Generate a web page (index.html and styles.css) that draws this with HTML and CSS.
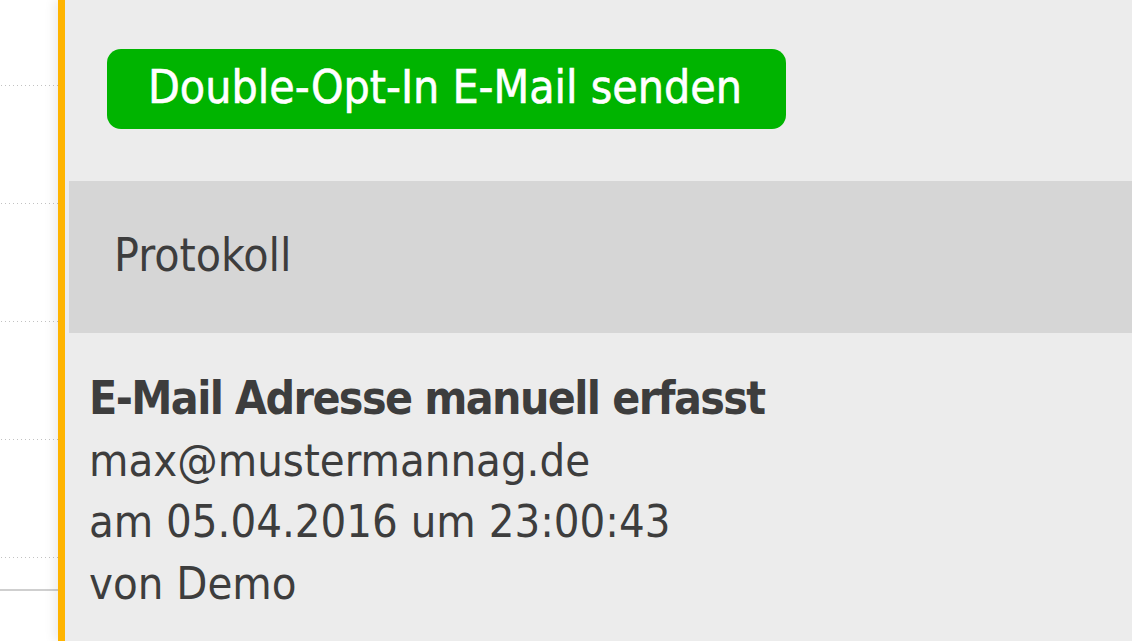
FILE: index.html
```html
<!DOCTYPE html>
<html lang="de">
<head>
    <meta charset="UTF-8" />
    <title>Kontakt: Protokoll</title>
    <link rel="stylesheet" href="styles.css">
</head>
<body>

<div class="layout">
    <div class="list">
        <div class="list-row first"></div>
        <div class="list-row"></div>
        <div class="list-row"></div>
        <div class="list-row"></div>
        <div class="list-row"></div>
        <div class="list-end"></div>
    </div>

    <div class="detail">
        <div class="actions">
            <button class="btn-green">Double-Opt-In E-Mail senden</button>
        </div>

        <div class="section-head">Protokoll</div>

        <div class="log-entry">
            <div class="log-title">E-Mail Adresse manuell erfasst</div>
            <div>max@mustermannag.de</div>
            <div>am 05.04.2016 um 23:00:43</div>
            <div>von Demo</div>
        </div>
    </div>
</div>

</body>
</html>
```

FILE: styles.css
```css
body {
    margin: 0;
    font-family: 'DejaVu Sans Condensed', 'DejaVu Sans', sans-serif;
    color: #3d3d3d;
    background: #ececec;
    overflow: hidden;
}

.layout {
    display: flex;
    height: 641px;
}

.list {
    width: 58px;
    flex-shrink: 0;
    background: #fff;
}

.list-row {
    height: 118px;
    background-image: linear-gradient(to right, #c2c2c2 1px, transparent 1px);
    background-size: 4px 1px;
    background-repeat: repeat-x;
    background-position: 1px bottom;
}

.list-row.first {
    height: 86px;
}

.list-end {
    height: 0;
    margin-top: 31px;
    border-bottom: 2px solid #cfcfcf;
}

.detail {
    flex: 1;
    background: #ececec;
    border-left: 7px solid #ffb400;
    box-shadow: -4px 0 10px rgba(0, 0, 0, 0.08);
}

.actions {
    padding: 49px 0 52px 42px;
}

.btn-green {
    display: block;
    width: 679px;
    height: 80px;
    padding: 0 0 4px 41px;
    border: none;
    border-radius: 14px;
    background: #00b400;
    color: #fff;
    font-family: inherit;
    font-size: 46px;
    text-align: left;
    line-height: 74px;
    -webkit-text-stroke: 0.6px #fff;
}

.section-head {
    margin-left: 4px;
    height: 152px;
    padding-left: 45px;
    background: #d6d6d6;
    font-size: 46px;
    line-height: 148px;
}

.log-entry {
    padding: 35px 0 0 24px;
    font-size: 45px;
    line-height: 61.7px;
}

.log-title {
    font-weight: bold;
    font-size: 46px;
    letter-spacing: -1.6px;
}
```
